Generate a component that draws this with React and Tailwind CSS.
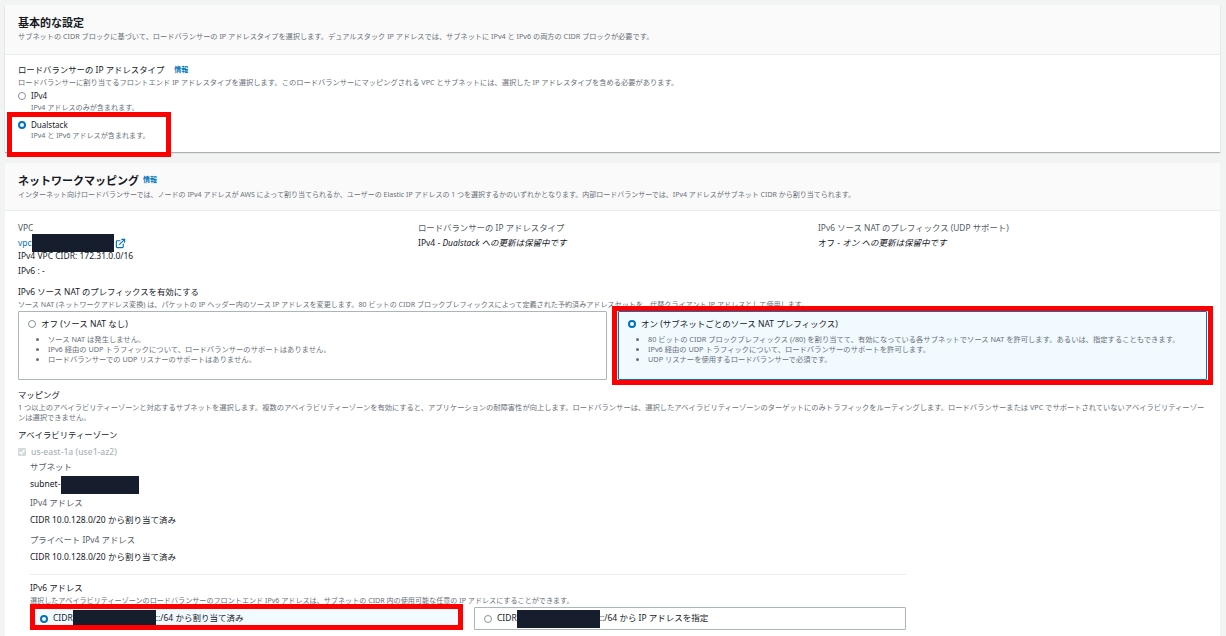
import React from 'react'
import { ExternalLink } from 'lucide-react'

const Radio = ({ checked }) => (
  <span
    className={`inline-block w-[8px] h-[8px] rounded-full shrink-0 bg-white ${
      checked ? 'border-[2.5px] border-[#0073bb]' : 'border border-[#879596]'
    }`}
  />
)

const Info = () => <span className="text-[7px] font-bold text-[#0073bb]">情報</span>

const Redact = ({ width }) => (
  <span className={`inline-block h-[18px] -my-[5px] align-middle bg-[#161d2d] ${width}`} />
)

const Highlight = ({ className }) => (
  <div className={`absolute border-[5px] border-[#ff0000] pointer-events-none ${className}`} />
)

const NatCard = ({ checked, title, items, children }) => (
  <div
    className={`relative flex-1 h-[69px] px-[9px] pt-[6px] border rounded-[1px] ${
      checked ? 'bg-[#f1faff] border-[#0073bb]' : 'bg-white border-[#aab7b8]'
    }`}
  >
    <div className="flex items-center gap-[5px] text-[8.5px] leading-[12px] text-[#16191f]">
      <Radio checked={checked} />
      <span>{title}</span>
    </div>
    <ul className="mt-[4px] pl-[20px] list-disc text-[7.3px] leading-[10px] text-[#687078]">
      {items.map((item) => (
        <li key={item}>{item}</li>
      ))}
    </ul>
    {children}
  </div>
)

const Label = ({ children, className = '' }) => (
  <div className={`text-[8.4px] leading-[12px] text-[#16191f] ${className}`}>{children}</div>
)

const Desc = ({ children, className = '' }) => (
  <div className={`text-[7.1px] leading-[10px] text-[#687078] ${className}`}>{children}</div>
)

const Value = ({ children, className = '' }) => (
  <div className={`text-[8.5px] leading-[12px] text-[#16191f] ${className}`}>{children}</div>
)

const Key = ({ children, className = '' }) => (
  <div className={`text-[8.4px] leading-[12px] text-[#545b64] ${className}`}>{children}</div>
)

export default function App() {
  return (
    <div
      className="w-[1226px] h-[636px] overflow-hidden bg-[#f2f3f3] pt-[5px] pl-[5px] pr-[6px]"
      style={{ fontFamily: '"Noto Sans", "Noto Sans CJK JP", sans-serif' }}
    >
      {/* 基本的な設定 */}
      <section className="h-[147px] bg-white shadow-[0_1px_1px_rgba(0,28,36,0.3)]">
        <header className="h-[50px] bg-[#fafafa] border-b border-[#eaeded] px-[13px] pt-[10px]">
          <h2 className="text-[11px] leading-[15px] font-bold text-[#16191f]">基本的な設定</h2>
          <Desc className="mt-[1px] text-[7.2px]">
            サブネットの CIDR ブロックに基づいて、ロードバランサーの IP アドレスタイプを選択します。デュアルスタック IP アドレスでは、サブネットに IPv4 と IPv6 の両方の CIDR ブロックが必要です。
          </Desc>
        </header>
        <div className="px-[13px] pt-[9px]">
          <div className="flex items-center gap-[10px]">
            <Label>ロードバランサーの IP アドレスタイプ</Label>
            <Info />
          </div>
          <Desc className="mt-[1px] text-[7.25px]">
            ロードバランサーに割り当てるフロントエンド IP アドレスタイプを選択します。このロードバランサーにマッピングされる VPC とサブネットには、選択した IP アドレスタイプを含める必要があります。
          </Desc>
          <div className="mt-[3px] flex items-center gap-[5px]">
            <Radio />
            <span className="text-[8px] leading-[12px] text-[#16191f]">IPv4</span>
          </div>
          <Desc className="pl-[13px]">IPv4 アドレスのみが含まれます。</Desc>
          <div className="relative mt-[7px]">
            <div className="flex items-center gap-[5px]">
              <Radio checked />
              <span className="text-[8px] leading-[12px] text-[#16191f]">Dualstack</span>
            </div>
            <Desc className="-mt-[1px] pl-[13px]">IPv4 と IPv6 アドレスが含まれます。</Desc>
            <Highlight className="-left-[11px] -top-[7px] w-[164px] h-[45px]" />
          </div>
        </div>
      </section>

      {/* ネットワークマッピング */}
      <section className="mt-[11px] h-[480px] bg-white">
        <header className="h-[48px] bg-[#fafafa] border-b border-[#eaeded] px-[13px] pt-[10px]">
          <div className="flex items-center gap-[4px]">
            <h2 className="text-[11px] leading-[15px] font-bold text-[#16191f]">ネットワークマッピング</h2>
            <Info />
          </div>
          <Desc className="mt-[2px] text-[7px]">
            インターネット向けロードバランサーでは、ノードの IPv4 アドレスが AWS によって割り当てられるか、ユーザーの Elastic IP アドレスの 1 つを選択するかのいずれかとなります。内部ロードバランサーでは、IPv4 アドレスがサブネット CIDR から割り当てられます。
          </Desc>
        </header>

        <div className="px-[13px] pt-[11px]">
          <div className="grid grid-cols-[400px_400px_400px]">
            <div>
              <Key>VPC</Key>
              <div className="mt-[3px] flex items-center h-[12px] text-[8.5px] text-[#0073bb]">
                vpc
                <Redact width="w-[82px]" />
                <ExternalLink size={11} className="ml-[1px]" strokeWidth={2.5} />
              </div>
              <Value className="mt-[1px]">IPv4 VPC CIDR: 172.31.0.0/16</Value>
              <Value className="mt-[3px]">IPv6 : -</Value>
            </div>
            <div>
              <Key>ロードバランサーの IP アドレスタイプ</Key>
              <Value className="mt-[3px]">
                IPv4 - <em>Dualstack への更新は保留中です</em>
              </Value>
            </div>
            <div>
              <Key>IPv6 ソース NAT のプレフィックス (UDP サポート)</Key>
              <Value className="mt-[3px]">
                オフ - <em>オン への更新は保留中です</em>
              </Value>
            </div>
          </div>

          <Label className="mt-[9px]">IPv6 ソース NAT のプレフィックスを有効にする</Label>
          <Desc className="mt-[1px] whitespace-nowrap">
            ソース NAT (ネットワークアドレス変換) は、パケットの IP ヘッダー内のソース IP アドレスを変更します。80 ビットの CIDR ブロックプレフィックスによって定義された予約済みアドレスセットを、代替クライアント IP アドレスとして使用します。
          </Desc>
          <div className="relative flex gap-[11px] w-[1189px] mt-[2px]">
            <NatCard
              title="オフ (ソース NAT なし)"
              items={[
                'ソース NAT は発生しません。',
                'IPv6 経由の UDP トラフィックについて、ロードバランサーのサポートはありません。',
                'ロードバランサーでの UDP リスナーのサポートはありません。',
              ]}
            />
            <NatCard
              checked
              title="オン (サブネットごとのソース NAT プレフィックス)"
              items={[
                '80 ビットの CIDR ブロックプレフィックス (/80) を割り当てて、有効になっている各サブネットでソース NAT を許可します。あるいは、指定することもできます。',
                'IPv6 経由の UDP トラフィックについて、ロードバランサーのサポートを許可します。',
                'UDP リスナーを使用するロードバランサーで必須です。',
              ]}
            >
              <Highlight className="-left-[7px] -top-[6px] -right-[7px] -bottom-[6px]" />
            </NatCard>
          </div>

          <Label className="mt-[9px]">マッピング</Label>
          <Desc className="mt-[1px] w-[1190px] text-[7.27px]">
            1 つ以上のアベイラビリティーゾーンと対応するサブネットを選択します。複数のアベイラビリティーゾーンを有効にすると、アプリケーションの耐障害性が向上します。ロードバランサーは、選択したアベイラビリティーゾーンのターゲットにのみトラフィックをルーティングします。ロードバランサーまたは VPC でサポートされていないアベイラビリティーゾーンは選択できません。
          </Desc>
          <Label className="mt-[7px]">アベイラビリティーゾーン</Label>
          <div className="mt-[5px] flex items-center gap-[5px] h-[12px]">
            <span className="flex items-center justify-center w-[8px] h-[8px] rounded-[1px] bg-[#d5dbdb]">
              <svg viewBox="0 0 8 8" className="w-[8px] h-[8px]" fill="none" stroke="white" strokeWidth="1.3">
                <path d="M1.5 4 L3.3 5.8 L6.5 2" />
              </svg>
            </span>
            <span className="text-[8.6px] font-medium text-[#aab7b8]">us-east-1a (use1-az2)</span>
          </div>

          <div className="pl-[12px]">
            <Key className="mt-[3px]">サブネット</Key>
            <Value className="mt-[5px]">
              subnet-
              <Redact width="ml-[1px] w-[78px]" />
            </Value>
            <Key className="mt-[7px]">IPv4 アドレス</Key>
            <Value className="mt-[5px]">CIDR 10.0.128.0/20 から割り当て済み</Value>
            <Key className="mt-[8px]">プライベート IPv4 アドレス</Key>
            <Value className="mt-[5px]">CIDR 10.0.128.0/20 から割り当て済み</Value>

            <div className="mt-[11px] w-[876px] border-t border-[#eaeded]" />
            <Label className="mt-[7px]">IPv6 アドレス</Label>
            <Desc className="mt-[1px]">
              選択したアベイラビリティーゾーンのロードバランサーのフロントエンド IPv6 アドレスは、サブネットの CIDR 内の使用可能な任意の IP アドレスにすることができます。
            </Desc>
            <div className="mt-[2px] flex gap-[11px] w-[876px]">
              <div className="relative w-[433px] h-[23px] flex items-center gap-[5px] px-[10px] bg-[#f1faff] text-[8.5px] text-[#16191f]">
                <Radio checked />
                <span>
                  CIDR
                  <Redact width="w-[83px]" />
                  ::/64 から割り当て済み
                </span>
                <Highlight className="left-0 -top-[3px] right-0 h-[26px]" />
              </div>
              <div className="w-[432px] h-[23px] flex items-center gap-[5px] px-[9px] bg-white border border-[#aab7b8] rounded-[1px] text-[8.5px] text-[#16191f]">
                <Radio />
                <span>
                  CIDR
                  <Redact width="w-[83px]" />
                  ::/64 から IP アドレスを指定
                </span>
              </div>
            </div>
          </div>
        </div>
      </section>
    </div>
  )
}
